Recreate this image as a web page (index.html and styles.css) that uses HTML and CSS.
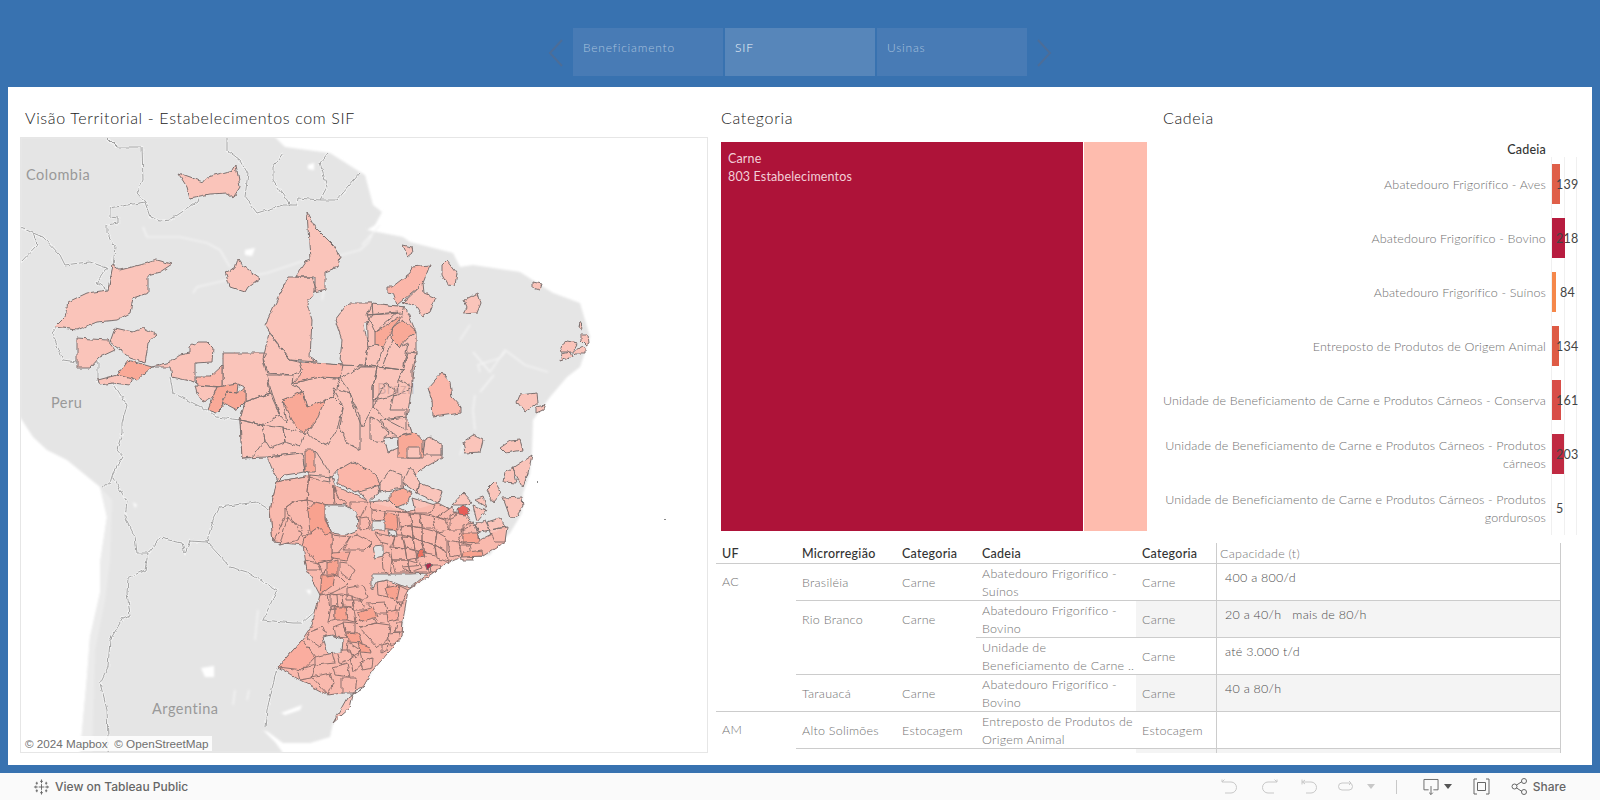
FILE: index.html
```html
<!DOCTYPE html>
<html lang="pt-BR">
<head>
<meta charset="utf-8">
<title>Visão Territorial - Estabelecimentos com SIF</title>
<link rel="stylesheet" href="styles.css">
</head>
<body>
<div class="app">
  <nav class="nav">
    <svg class="chev" viewBox="0 0 16 28"><path d="M14 1 2 14l12 13"/></svg>
    <div class="tabs">
      <a class="tab">Beneficiamento</a>
      <a class="tab tab-on">SIF</a>
      <a class="tab">Usinas</a>
    </div>
    <svg class="chev" viewBox="0 0 16 28"><path d="M2 1l12 13L2 27"/></svg>
  </nav>

  <main class="panel">
    <section class="mapcol">
      <h2 class="title title-map">Visão Territorial - Estabelecimentos com SIF</h2>
      <div class="map">
        <svg class="mapsvg" viewBox="21 138 686 614">
          <defs>
            <filter id="rough" filterUnits="userSpaceOnUse" x="21" y="138" width="686" height="614">
              <feTurbulence type="fractalNoise" baseFrequency=".16" numOctaves="2" seed="4"/>
              <feDisplacementMap in="SourceGraphic" scale="4" xChannelSelector="R" yChannelSelector="G"/>
            </filter>
            <filter id="soft" filterUnits="userSpaceOnUse" x="0" y="120" width="720" height="650">
              <feGaussianBlur stdDeviation=".9"/>
            </filter>
            <path id="borders" d="M107 137 117 147 142 147 143 180 137 193 145 202 150 217 160 221 170 220 197 202 198 198M227 137 227 150 240 160 248 173 245 197 257 213 283 205 297 205 298 198 320 200 337 200 360 173M283 153 273 167 273 180 287 200 290 205M328 153 320 163 327 187 320 200M145 202 110 208 110 217 118 218 118 223 107 225 107 233 115 247 113 267 108 290M20 227 33 233 43 237 60 255 65 265 80 263 90 262 107 268 97 283 107 290M33 233 37 245 20 263M57 327 52 333 63 360 77 362 98 362 98 382 113 383 127 405 122 423 122 433 117 450 123 457 113 473 110 483 102 487M113 477 127 502 125 517 135 537 137 553 148 553 145 570 128 578 127 593 130 615 123 618 110 640 108 667 100 683 107 710 108 737 107 753M148 553 160 538 182 543 185 553 190 541 207 542 213 520 220 507 257 502 270 510M207 542 230 567 247 572 277 590 263 620 293 623 302 623 317 610M170 377 173 393 207 410 217 417 240 420M277 668 267 710 265 727"/>
          </defs>
          <g filter="url(#soft)">
            <path class="land" d="M20 137H275L285 147 330 153 360 172 365 175 373 205 382 212 375 225 367 230 403 237 410 242 453 253 460 267 473 265 520 272 553 293 580 303 590 337 580 367 567 377 550 397 533 420 532 450 530 473 523 493 522 513 510 533 493 550 490 555 460 557 447 563 427 577 408 590 403 620 402 637 383 653 373 670 363 687 350 697 333 723 330 737 310 743 283 743 268 732 263 730 275 742 283 753H80L87 677 90 637 100 593 100 563 107 517 100 487 67 460 47 450 33 437 20 417Z"/>
            <path class="land-light" d="M100 487 112 500 110 560 105 600 95 650 92 753H80L87 677 90 637 100 593 100 563 107 517Z"/>
            <path class="water" d="M143 227 147 237 180 237 207 243 220 250 230 267M193 293 197 287 227 280 267 273 300 262 330 258 360 250M360 250 368 243 372 235M318 270 325 285 322 300M380 225 362 245M460 340 470 325M480 372 478 365 500 358 505 352M494 375 480 392M473 352 490 372 505 350 525 365 548 372M475 395 473 410 475 430M465 440 460 455M258 610 255 640M249 690 247 700M235 690 233 705"/>
            <path class="water-blob" d="M308 165 314 163 314 170 308 169ZM245 250 255 248 252 256 245 255ZM201 668 214 666 214 677 205 677ZM133 502 137 505 135 508ZM306 590 311 590 310 595ZM281 713 302 705 300 710 285 715ZM436 525 440 532 438 540 434 535Z"/>
          </g>
          <g filter="url(#rough)">
            <use href="#borders" class="halo"/>
            <use href="#borders" class="border"/>
          </g>
          <g class="regions" filter="url(#rough)">
            <path class="r1" d="M245 402 270 393 263 360 343 365 365 366 403 370 412 387 407 417 412 433 423 440 442 445 442 458 420 470 402 488 380 485 355 462 338 470 332 477 305 472 302 453 267 457 242 458 240 420ZM270 510 277 482 310 475 335 485 370 502 407 512 438 503 470 520 480 540 505 527 505 542 483 556 462 557 447 563 427 577 408 590 403 620 402 637 373 670 363 687 342 693 328 695 300 680 278 667 302 640 312 625 320 595 307 570 303 545 273 542ZM367 303 405 307 416 332 416 353 412 387 398 395 373 400 365 366 368 337Z"/>
            <path class="r1" d="M178 173 192 178 203 182 207 177 233 170 236 165 240 187 233 198 227 193 210 194 190 198 187 187ZM113 265 120 270 140 265 157 260 172 264 160 272 148 275 148 293 133 298 130 313 117 320 97 322 77 330 55 327 65 317 68 302 87 293 108 290ZM77 338 107 340 115 350 100 357 90 368 77 368ZM115 328 133 332 143 328 157 335 148 343 145 363 130 358 110 342ZM98 380 117 375 133 378 130 385 113 383 100 385ZM152 367 170 362 180 355 190 353 190 347 197 342 207 342 213 348 212 362 195 363 195 382 172 377 170 367ZM195 385 217 387 213 397 203 402 197 393ZM223 353 267 353 263 360 267 375 270 393 245 402 245 387 238 384 223 387ZM307 212 315 227 333 245 340 257 338 267 325 272 325 290 315 293 315 277 295 277 305 262 310 260ZM288 277 312 277 317 290 307 303 312 320 310 357 317 362 290 360 270 333 265 325ZM238 259 242 265 260 278 248 287 245 292 230 287 225 272 235 268ZM269 333 290 360 303 363 300 372 293 375 268 373 263 358ZM335 320 348 303 371 303 372 315 364 325 368 347 365 366 343 365 340 360 342 340ZM372 303 405 307 403 313 367 315ZM367 315 398 312 375 332ZM375 345 383 347 377 367 365 365 368 347ZM393 340 400 347 408 343 403 370 382 367ZM408 352 416 353 412 370 412 387 398 380 403 370ZM423 283 424 293 436 298 430 312 423 317 415 305 402 303ZM403 245 412 247 413 253 408 257ZM447 260 457 273 455 285 447 284 442 275 442 265ZM478 293 481 303 477 313 463 314 467 307 464 300ZM533 282 542 284 540 290 533 288ZM580 322 583 327 582 329 579 327ZM581 335 588 335 589 343 586 345 581 340ZM567 341 578 343 573 352 562 352 560 347ZM562 354 570 352 572 357 560 361ZM573 352 582 347 586 350 586 354 575 354ZM520 395 537 393 538 403 525 412 517 402ZM536 407 545 405 543 410 536 413ZM267 375 293 375 292 385 302 390 297 397 283 400 287 423 280 415 272 393ZM293 383 320 377 340 378 337 388 333 397 308 407 302 390ZM325 400 333 397 343 407 338 427 328 445 315 440 307 433ZM333 388 350 393 360 417 360 450 347 443 340 427 343 407 337 395ZM360 367 377 367 373 387 373 407 362 427 355 410 350 393 340 378ZM377 367 403 370 398 380 397 393 388 397 373 400 373 387ZM385 383 395 390 390 410 406 410 406 430 387 420 373 407ZM380 420 407 417 412 433 397 437 388 430ZM370 417 378 420 388 432 383 442 370 440ZM425 440 430 437 442 445 442 455 423 455ZM463 442 473 435 483 440 480 452 465 453ZM500 448 510 441 520 440 523 450 505 453ZM245 402 270 393 280 415 262 425 240 420ZM240 420 262 425 265 440 252 457 242 458ZM262 425 283 428 285 442 270 448 265 440ZM283 428 305 433 300 447 285 442ZM267 457 302 453 305 472 285 475 278 482ZM315 450 328 470 330 482 308 478ZM277 482 310 475 307 500 293 502 285 508 285 517 273 542 270 510ZM285 508 293 502 307 500 309 510 310 528 303 537ZM287 518 303 528 298 540 280 545ZM333 485 338 497 348 504 335 505ZM307 500 310 475 332 477 335 485 333 505 327 505 315 502ZM358 490 378 485 380 492 368 502ZM380 483 390 470 402 475 402 488 380 492ZM403 483 410 467 420 483 417 493ZM417 493 420 483 437 490 442 492 438 503ZM412 498 435 505 430 513 415 513ZM350 502 368 502 360 518 350 512ZM370 502 390 500 397 507 407 512 372 510ZM332 535 350 537 342 548 332 560ZM350 537 357 535 372 543 365 550 343 550ZM305 560 317 563 322 570 307 570ZM317 563 332 560 323 575ZM340 562 347 563 355 570 350 580 340 572ZM335 575 340 577 348 585 332 593 320 595ZM347 588 363 585 368 597 363 600 347 600ZM377 582 387 580 388 597 378 595ZM400 586 408 590 400 605 395 600ZM360 518 368 517 370 528 360 530ZM372 510 385 511 386 520 372 521ZM398 512 410 513 412 525 400 527ZM410 513 420 514 421 528 412 526ZM420 514 433 516 435 528 422 528ZM433 516 445 520 450 530 437 532 435 528ZM400 527 412 526 413 538 402 535ZM412 526 422 528 422 541 413 538ZM422 528 437 532 435 545 422 541ZM437 532 447 538 447 552 435 545ZM375 533 385 535 395 537 392 545 380 542ZM395 535 402 535 405 548 393 546ZM403 537 413 538 415 550 406 548ZM413 538 422 541 425 553 415 550ZM422 541 435 545 436 555 425 553ZM435 545 447 552 448 562 437 558ZM390 547 405 548 407 560 392 560ZM405 548 416 551 417 563 407 560ZM387 552 392 560 390 575 383 570 382 555ZM392 560 407 560 410 572 395 572ZM407 560 418 558 422 568 410 572ZM402 567 425 565 430 572 410 572ZM430 565 440 565 441 568 431 572ZM450 515 462 510 470 520 462 530 450 530ZM462 530 475 525 480 540 470 545 458 542ZM448 540 458 542 460 555 450 557ZM460 545 470 545 473 560 462 560ZM452 505 463 493 472 503 463 505ZM473 505 487 510 477 522ZM475 500 483 497 487 508ZM487 490 495 482 501 492 493 502ZM438 517 452 507 457 515 447 520ZM463 525 473 523 480 532 463 543ZM475 525 485 520 490 530 480 532ZM487 522 500 518 505 527 490 530ZM490 530 507 527 505 542 495 542ZM505 472 513 467 517 483 503 482ZM512 468 532 455 528 473 523 487ZM503 498 522 497 523 507 515 518 510 517ZM331 595 342 594 343 606 331 607ZM342 594 352 596 353 607 343 606ZM352 596 362 600 365 610 354 610ZM331 607 335 607 335 620 328 622ZM345 607 354 610 356 622 347 620ZM367 603 385 602 387 613 375 613ZM397 602 402 602 400 610 395 610ZM397 622 403 622 402 632 395 632ZM343 622 355 623 355 632 345 632ZM355 622 373 617 377 623 360 627ZM375 623 390 625 388 640 377 647 360 628ZM388 633 400 632 397 643 390 645ZM382 645 388 643 387 650 382 653ZM333 627 343 623 347 638 335 637ZM348 642 360 650 357 658 347 650ZM310 632 323 627 327 637 320 647 307 638ZM315 657 332 653 335 663 315 665ZM297 670 315 665 312 678 300 680ZM312 677 330 673 333 683 328 695ZM333 667 347 663 350 677 335 675ZM342 678 357 678 355 693 342 693ZM337 650 350 650 353 658 340 663ZM350 658 360 652 363 663 353 672ZM360 662 373 658 372 668 363 670ZM333 723 347 698 365 687 353 695 350 708ZM328 593 337 595 338 608 330 610Z"/>
            <path class="r2" d="M392 287 410 273 412 267 430 265 423 283 397 305 393 293 387 292 387 287ZM442 372 450 383 452 397 461 407 461 413 433 417 432 400 428 388ZM300 362 343 365 340 378 320 377 293 383 303 372ZM278 667 302 640 315 657 303 670ZM352 462 375 473 380 485 355 492 338 483 338 470ZM307 533 310 533 318 527 332 535 332 560 317 563 303 545ZM332 553 350 552 347 560 333 558ZM196 377 210 377 223 365 223 387 197 385ZM387 612 397 610 398 620 388 622Z"/>
            <path class="r3" d="M128 360 145 365 152 367 137 380 117 375ZM217 387 238 384 237 393 227 392 222 400 223 407 217 413 208 410 213 397ZM227 392 237 393 245 387 245 402 237 410 222 402ZM283 400 302 392 307 407 325 400 315 423 303 433 292 420ZM375 332 403 315 393 327 383 347 375 345ZM403 320 416 332 408 338 400 347 391 338 393 327ZM398 437 415 433 423 440 423 458 398 458ZM305 450 315 450 315 472 305 472ZM308 510 315 502 327 505 325 520 332 533 325 535 318 527 310 533ZM390 493 403 488 412 493 407 503 397 507 390 500ZM327 563 338 560 338 575 327 577ZM322 575 335 575 333 585 320 595ZM385 588 400 585 397 600 388 597ZM335 607 345 607 347 620 335 620ZM358 613 373 607 377 617 360 622ZM387 513 397 515 398 530 380 528ZM347 632 358 633 362 643 348 642ZM358 642 370 647 372 653 360 652ZM463 553 482 550 483 556 462 557ZM463 533 478 533 480 542 463 543Z"/>
            <path class="r1" d="M407 447 420 447 420 458 407 458Z"/>
            <path class="regions-tint" d="M270 510 277 482 310 475 335 485 370 502 407 512 438 503 470 520 480 540 505 527 505 542 483 556 462 557 447 563 427 577 408 590 403 620 402 637 373 670 363 687 342 693 328 695 300 680 278 667 302 640 312 625 320 595 307 570 303 545 273 542Z"/>
            <path class="hole" d="M384 438 397 437 398 448 388 452ZM325 505 345 505 357 512 358 530 345 535 332 533 325 518ZM373 546 383 545 383 556 375 558ZM372 521 385 521 385 530 372 530ZM388 530 396 530 397 535 389 536ZM323 637 332 635 343 640 342 652 328 654ZM372 574 410 574 428 573 410 588 400 585 387 580 377 582 372 590Z"/>
            <path class="r4" d="M417 552 423 550 425 557 418 558Z"/>
            <path class="r5" d="M457 510 463 505 470 510 465 516 458 515Z"/>
            <path class="r6" d="M425 563 432 565 427 570Z"/>
          </g>
          <path class="dot" d="M537 481h1v2h-1zM664 519h2v1h-2z"/>
          <text class="place" x="26" y="180">Colombia</text>
          <text class="place" x="51" y="408">Peru</text>
          <text class="place" x="152" y="714">Argentina</text>
          <text class="place place-faint" x="377" y="394">Brazil</text>
        </svg>
        <div class="credit">© 2024 Mapbox&nbsp; © OpenStreetMap</div>
      </div>
    </section>

    <section class="rightcol">
      <div class="top">
        <div class="cat">
          <h2 class="title title-cat">Categoria</h2>
          <div class="treemap">
            <div class="tree-main">Carne<br>803 Estabelecimentos</div>
            <div class="tree-side"></div>
          </div>
        </div>
        <div class="cad">
          <h2 class="title title-cad">Cadeia</h2>
          <div class="cad-head">Cadeia</div>
          <div class="bars">
            <div class="bar-row"><div class="bar-label">Abatedouro Frigorífico - Aves</div><div class="plot"><i class="bar bar-a" style="width:8px"></i><span class="val">139</span></div></div>
            <div class="bar-row"><div class="bar-label">Abatedouro Frigorífico - Bovino</div><div class="plot"><i class="bar bar-b" style="width:13px"></i><span class="val">218</span></div></div>
            <div class="bar-row"><div class="bar-label">Abatedouro Frigorífico - Suínos</div><div class="plot"><i class="bar bar-c" style="width:4px"></i><span class="val val-in">84</span></div></div>
            <div class="bar-row"><div class="bar-label">Entreposto de Produtos de Origem Animal</div><div class="plot"><i class="bar bar-d" style="width:7px"></i><span class="val">134</span></div></div>
            <div class="bar-row"><div class="bar-label">Unidade de Beneficiamento de Carne e Produtos Cárneos - Conserva</div><div class="plot"><i class="bar bar-e" style="width:9px"></i><span class="val">161</span></div></div>
            <div class="bar-row"><div class="bar-label">Unidade de Beneficiamento de Carne e Produtos Cárneos - Produtos<br>cárneos</div><div class="plot"><i class="bar bar-f" style="width:12px"></i><span class="val">203</span></div></div>
            <div class="bar-row"><div class="bar-label">Unidade de Beneficiamento de Carne e Produtos Cárneos - Produtos<br>gordurosos</div><div class="plot"><span class="val">5</span></div></div>
          </div>
        </div>
      </div>

      <div class="table">
        <div class="thead">
          <div class="c-uf">UF</div><div class="c-mi">Microrregião</div><div class="c-ca">Categoria</div><div class="c-ch">Cadeia</div><div class="c-c2">Categoria</div><div class="c-cap cap-head">Capacidade (t)</div>
        </div>
        <div class="uf">
          <div class="c-uf uf-name">AC</div>
          <div class="micros">
            <div class="micro">
              <div class="c-mi top-text">Brasiléia</div><div class="c-ca top-text">Carne</div>
              <div class="chains">
                <div class="chain"><div class="c-ch two">Abatedouro Frigorífico -<br>Suínos</div><div class="c-c2">Carne</div><div class="c-cap">400 a 800/d</div></div>
              </div>
            </div>
            <div class="micro">
              <div class="c-mi top-text">Rio Branco</div><div class="c-ca top-text">Carne</div>
              <div class="chains">
                <div class="chain chain-line"><div class="c-ch two">Abatedouro Frigorífico -<br>Bovino</div><div class="c-c2 shade">Carne</div><div class="c-cap shade">20 a 40/h &nbsp; mais de 80/h</div></div>
                <div class="chain"><div class="c-ch two">Unidade de<br>Beneficiamento de Carne ..</div><div class="c-c2">Carne</div><div class="c-cap">até 3.000 t/d</div></div>
              </div>
            </div>
            <div class="micro micro-last">
              <div class="c-mi top-text">Tarauacá</div><div class="c-ca top-text">Carne</div>
              <div class="chains">
                <div class="chain"><div class="c-ch two">Abatedouro Frigorífico -<br>Bovino</div><div class="c-c2 shade">Carne</div><div class="c-cap shade">40 a 80/h</div></div>
              </div>
            </div>
          </div>
        </div>
        <div class="uf">
          <div class="c-uf uf-name">AM</div>
          <div class="micros">
            <div class="micro">
              <div class="c-mi top-text">Alto Solimões</div><div class="c-ca top-text">Estocagem</div>
              <div class="chains">
                <div class="chain"><div class="c-ch two">Entreposto de Produtos de<br>Origem Animal</div><div class="c-c2">Estocagem</div><div class="c-cap"></div></div>
              </div>
            </div>
            <div class="micro">
              <div class="c-mi"></div><div class="c-ca"></div>
              <div class="chains">
                <div class="chain"><div class="c-ch"></div><div class="c-c2 shade"></div><div class="c-cap shade"></div></div>
              </div>
            </div>
          </div>
        </div>
      </div>
    </section>
  </main>

  <footer class="toolbar">
    <a class="tb-brand">
      <svg class="logo" viewBox="0 0 18 18"><path d="M9 1v4M7.500 3h3M9 13v4M7.500 15h3M1 9h4M3 7.500v3M13 9h4M15 7.500v3M9 6v6M6 9h6M4 3.500v3M2.800 5h2.400M14 3.500v3M12.800 5h2.400M4 11.500v3M2.800 13h2.400M14 11.500v3M12.800 13h2.400"/></svg>
      <span>View on Tableau Public</span>
    </a>
    <div class="tb-actions">
      <svg class="ico ico-off" viewBox="0 0 17 16"><path d="M1 3h9a5.500 5.500 0 0 1 0 11H4M3.500 .5 1 3v-2.500"/></svg>
      <svg class="ico ico-off" viewBox="0 0 17 16"><path d="M16 3H7a5.500 5.500 0 0 0 0 11h6M13.500 .5 16 3v-2.500"/></svg>
      <svg class="ico ico-off ico-rev" viewBox="0 0 17 16"><path d="M1 .5v5M1 3h9a5.500 5.500 0 0 1 0 11H5M4 1 1.500 3 4 5"/></svg>
      <svg class="ico ico-off" viewBox="0 0 17 16"><path d="M12 4H5a3.500 3.500 0 0 0 0 7h7a3.500 3.500 0 0 0 0-7M12 2l2 2-2 2"/></svg>
      <i class="caret caret-off"></i>
      <i class="sep"></i>
      <span class="dl">
        <svg class="ico ico-dl" viewBox="0 0 17 18"><path d="M6 12H1V1h15v11h-5M8.500 8v9M6.500 15l2 2 2-2"/></svg>
        <i class="caret"></i>
      </span>
      <svg class="ico ico-fs" viewBox="0 0 17 17"><path d="M4 1H1v15h3M13 1h3v15h-3M4.500 4.500h8v8h-8z"/></svg>
      <span class="share">
        <svg class="ico ico-sh" viewBox="0 0 17 17"><path d="M5.300 7.200 11 3.500M5.300 9.800 11 13.500"/><circle cx="3.500" cy="8.500" r="2.500"/><circle cx="13" cy="3" r="2.500"/><circle cx="13" cy="14" r="2.500"/></svg>
        <span>Share</span>
      </span>
    </div>
  </footer>
</div>
</body>
</html>
```

FILE: styles.css
```css
* { box-sizing: border-box; }
html, body { margin: 0; height: 100%; overflow: hidden; }
body { font-family: "Lato", "Noto Sans", sans-serif; font-weight: 300; background: #3872b0; color: #777; }
i { display: block; }

.app { width: 1600px; height: 800px; display: flex; flex-direction: column; }

/* navigation */
.nav { height: 87px; padding-top: 28px; display: flex; justify-content: center; align-items: flex-start; gap: 9px; }
.chev { width: 16px; height: 28px; margin-top: 11px; fill: none; stroke: #4c6d98; stroke-width: 2; }
.tabs { display: flex; gap: 2px; }
.tab { width: 150px; height: 48px; padding: 11px 10px 0; background: #487bb5; color: #a9c2de; font-size: 12px; line-height: 18px; letter-spacing: .8px; }
.tab-on { background: #5786ba; color: #eef3f9; }

/* panel */
.panel { height: 678px; margin: 0 8px; padding: 18px 0 0 12px; background: #fff; display: flex; }
.title { margin: 0; font-size: 16px; font-weight: 300; line-height: 26px; letter-spacing: .65px; color: #222; }
.mapcol { width: 688px; }
.title-map { height: 32px; padding-left: 5px; }
.map { position: relative; width: 688px; height: 616px; border: 1px solid #e6e6e6; overflow: hidden; }
.mapsvg { display: block; width: 686px; height: 614px; }
.land { fill: #e5e5e5; }
.land-light { fill: #ebebeb; }
.water { fill: none; stroke: #f6f6f6; stroke-width: 1.200; }
.water-blob { fill: #fff; }
.halo { fill: none; stroke: #f4f4f4; stroke-width: 2.500; }
.border { fill: none; stroke: #a2a2a2; stroke-width: 1; stroke-linejoin: round; }
.regions path { stroke: #7d7170; stroke-width: 1; stroke-linejoin: round; }
.regions .hole { fill: #e5e5e5; stroke: #7d7170; }
.regions .regions-tint { fill: rgba(245,120,100,.14); stroke: none; }
.r1 { fill: #fac4ba; }
.r2 { fill: #fbb6a9; }
.r3 { fill: #f9a997; }
.r4 { fill: #ec6f60; }
.r5 { fill: #e85d58; }
.r6 { fill: #b02a4c; }
.dot { fill: #888; }
.place { font-family: "Lato", sans-serif; font-weight: 400; font-size: 14.500px; letter-spacing: .5px; fill: #999; }
.place-faint { fill: rgba(150,120,120,.35); }
.credit { position: absolute; left: 1px; bottom: 1px; padding: 0 3px; height: 15px; background: rgba(255,255,255,.85); font-family: "Liberation Sans", sans-serif; font-size: 11.700px; line-height: 15px; color: #707070; white-space: nowrap; }

/* right column */
.rightcol { width: 876px; margin-left: 8px; }
.top { height: 438px; display: flex; }
.cat { width: 431px; margin-left: 4px; }
.title-cat { height: 37px; padding-left: 1px; }
.treemap { width: 426px; margin-left: 1px; height: 389px; display: flex; gap: 1px; }
.tree-main { width: 362px; padding: 8px 7px; background: #ae1339; color: #f2cfd7; font-size: 12.500px; font-weight: 400; line-height: 18px; letter-spacing: .15px; }
.tree-side { flex: 1; background: #febcae; }
.cad { width: 414px; margin-left: 12px; }
.title-cad { height: 36px; }
.cad-head { width: 383px; height: 16px; font-size: 12.500px; line-height: 18px; font-weight: 500; color: #333; text-align: right; letter-spacing: .2px; }
.bar-row { height: 54px; display: flex; align-items: stretch; }
.bar-label { width: 383px; flex: none; align-self: center; padding-top: 2px; font-size: 12.500px; line-height: 18px; text-align: right; letter-spacing: .15px; white-space: nowrap; color: #717171; }
.plot { position: relative; width: 27px; margin-left: 5px; display: flex; align-items: center; border-left: 1px solid #f0f0f0; border-right: 1px solid #f0f0f0; background: linear-gradient(#f0f0f0, #f0f0f0) 12px 0 / 1px 100% no-repeat; }
.bar { height: 40px; }
.bar-a { background: #df5f49; }
.bar-b { background: #b71c3f; }
.bar-c { background: #f5874a; }
.bar-d { background: #de5b45; }
.bar-e { background: #d84e48; }
.bar-f { background: #c02a42; }
.val { position: absolute; left: 4px; top: 1px; line-height: 54px; font-size: 12.500px; font-weight: 400; letter-spacing: .2px; color: #444; }
.val-in { left: 8px; }

/* table */
.table { width: 845px; height: 210px; overflow: hidden; font-size: 12.500px; line-height: 18px; letter-spacing: .25px; color: #737373; }
.thead { height: 21px; display: flex; border-bottom: 1px solid #ccc; color: #333; font-weight: 500; line-height: 22px; }
.c-uf, .c-mi, .c-ca, .c-ch, .c-c2 { padding-left: 6px; flex: none; white-space: nowrap; }
.c-uf { width: 80px; }
.c-mi { width: 100px; }
.c-ca { width: 80px; }
.c-ch { width: 160px; }
.c-c2 { width: 80px; }
.c-cap { width: 345px; flex: none; padding: 5px 0 0 8px; border-left: 1px solid #ccc; border-right: 1px solid #ccc; color: #4d4d4d; white-space: nowrap; }
.cap-head { padding: 0 0 0 3px; color: #777; font-weight: 300; }
.uf { display: flex; border-bottom: 1px solid #ccc; }
.uf-name { height: 36px; line-height: 36px; }
.micros { width: 765px; }
.micro { display: flex; border-bottom: 1px solid #ccc; }
.micro-last { border-bottom: 0; }
.top-text { height: 36px; line-height: 38px; }
.chain { display: flex; height: 36px; }
.chain-line { height: 37px; border-bottom: 1px solid #ccc; }
.chain > .c-c2 { line-height: 38px; }
.two { padding-top: 1px; line-height: 18px; }
.shade { background: #f4f4f4; }

/* toolbar */
.toolbar { height: 27px; margin-top: 8px; padding: 0 34px 0 33px; background: #fafafa; display: flex; justify-content: space-between; align-items: center; font-family: "Inter", "Liberation Sans", sans-serif; font-size: 12px; font-weight: 500; color: #666; }
.tb-brand { display: flex; align-items: center; gap: 5px; }
.logo { width: 17px; height: 18px; fill: none; stroke: #666; stroke-width: 1; }
.tb-actions { display: flex; align-items: center; }
.ico { display: block; width: 17px; height: 16px; fill: none; stroke: #666; stroke-width: 1; }
.ico-off { stroke: #c8c8c8; margin-right: 23px; }
.ico-rev { margin-right: 19px; }
.caret { width: 0; height: 0; border-left: 4px solid transparent; border-right: 4px solid transparent; border-top: 5px solid #555; }
.caret-off { border-top-color: #c8c8c8; margin-left: -10px; }
.sep { width: 1px; height: 14px; background: #c8c8c8; margin: 0 26px 0 21px; }
.dl { display: flex; align-items: center; gap: 5px; margin-right: 21px; }
.ico-dl { width: 16px; height: 18px; }
.ico-fs { width: 17px; height: 17px; margin-right: 21px; }
.share { display: flex; align-items: center; gap: 5px; }
.ico-sh { width: 17px; height: 17px; }
```
